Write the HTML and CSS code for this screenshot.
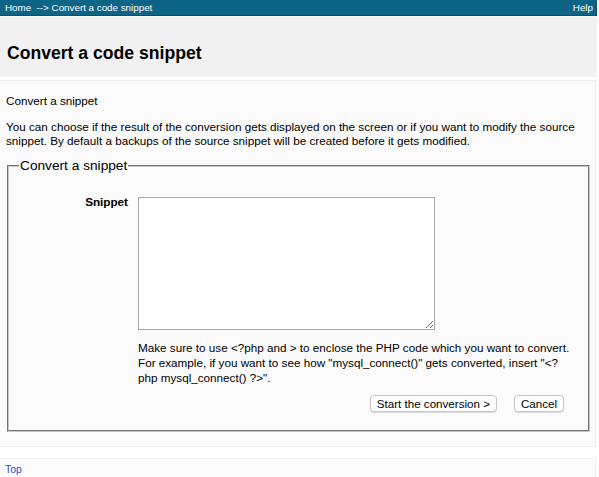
FILE: index.html
```html
<!DOCTYPE html>
<html>
<head>
<meta charset="utf-8">
<link rel="stylesheet" href="styles.css">
</head>
<body>
<div class="page">
  <div class="topbar">
    <div class="crumbs"><a href="#">Home</a>&nbsp; --&gt; <a href="#">Convert a code snippet</a></div>
    <a href="#" class="help">Help</a>
  </div>
  <div class="header">
    <h1>Convert a code snippet</h1>
  </div>
  <div class="content">
    <p class="intro">Convert a snippet</p>
    <p class="desc">You can choose if the result of the conversion gets displayed on the screen or if you want to modify the source<br>snippet. By default a backups of the source snippet will be created before it gets modified.</p>
    <fieldset class="box">
      <legend>Convert a snippet</legend>
      <div class="row">
        <label class="lbl" for="snip">Snippet</label>
        <div class="field">
          <textarea id="snip"></textarea>
          <p class="hint">Make sure to use &lt;?php and &gt; to enclose the PHP code which you want to convert.<br>For example, if you want to see how "mysql_connect()" gets converted, insert "&lt;?<br>php mysql_connect() ?&gt;".</p>
          <div class="buttons">
            <button>Start the conversion &gt;</button>
            <button>Cancel</button>
          </div>
        </div>
      </div>
    </fieldset>
  </div>
  <div class="footer"><a href="#">Top</a></div>
</div>
</body>
</html>
```

FILE: styles.css
```css
html, body {
  margin: 0;
  padding: 0;
  background: #fff;
}
body {
  font-family: "Liberation Sans", Arial, sans-serif;
  font-size: 11.7px;
  color: #000;
}
.page {
  width: 597px;
}
.topbar {
  display: flex;
  justify-content: space-between;
  align-items: center;
  height: 15px;
  background: #0c6487;
  border-bottom: 1px solid #09506d;
  border-right: 1px solid #09506d;
  padding: 0 3px 0 5px;
  font-size: 9.8px;
  line-height: 15px;
  box-sizing: content-box;
  width: 588px;
}
.topbar a {
  color: #fff;
  text-decoration: none;
}
.crumbs {
  color: #fff;
}
.header {
  margin-top: 1px;
  background: #f1f1f1;
  height: 60px;
  box-sizing: border-box;
  padding: 26px 0 0 7px;
}
.header h1 {
  margin: 0;
  font-size: 17.6px;
  line-height: 20px;
  font-weight: bold;
}
.content {
  margin-top: 3px;
  background: #fbfbfb;
  border-top: 1px solid #efefef;
  border-right: 1px solid #efefef;
  border-bottom: 1px solid #efefef;
  width: 596px;
  padding: 13px 0 14px 6px;
  box-sizing: border-box;
}
.intro {
  margin: 0 0 12px 0;
  line-height: 14px;
}
.desc {
  margin: 0 0 10px 0;
  line-height: 14px;
}
.box {
  margin: 0 0 0 1px;
  width: 583px;
  box-sizing: border-box;
  border: 2px groove #c8c8c8;
  padding: 23px 0 18px 0;
}
.box legend {
  font-size: 13.7px;
  line-height: 16px;
  padding: 0 1px;
  margin-left: 10px;
}
.row {
  display: flex;
  align-items: flex-start;
}
.lbl {
  width: 119px;
  text-align: right;
  font-weight: bold;
  margin-right: 10px;
  line-height: 14px;
  margin-top: -2px;
}
.field {
  flex: 1;
}
textarea {
  display: block;
  width: 297px;
  height: 133px;
  box-sizing: border-box;
  border: 1px solid #a9a9a9;
  background: #fff;
  margin: 0;
}
.hint {
  margin: 10px 0 0 0;
  line-height: 15px;
  white-space: nowrap;
}
.buttons {
  display: flex;
  justify-content: flex-end;
  gap: 17px;
  margin-top: 10px;
  padding-right: 24px;
}
button {
  font-family: "Liberation Sans", Arial, sans-serif;
  font-size: 11.6px;
  color: #000;
  background: #fff;
  border: 1px solid #c6c6c6;
  border-radius: 4px;
  height: 17px;
  padding: 0 6px;
  line-height: 15px;
  box-shadow: 0 1px 0 #dcdcdc;
}
.footer {
  margin-top: 11px;
  background: #fbfbfb;
  border-top: 1px solid #efefef;
  border-right: 1px solid #efefef;
  width: 596px;
  box-sizing: border-box;
  height: 21px;
  padding: 3px 5px;
  font-size: 10.5px;
  line-height: 14px;
}
.footer a {
  color: #2552c8;
  text-decoration: none;
}
```
